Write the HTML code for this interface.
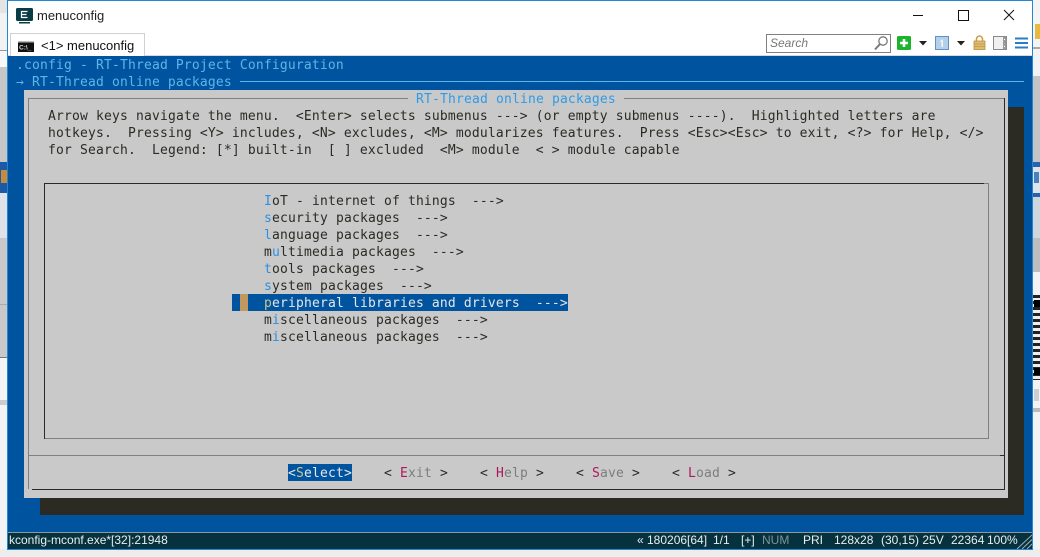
<!DOCTYPE html>
<html><head><meta charset="utf-8"><style>
html,body{margin:0;padding:0;width:1040px;height:557px;overflow:hidden;background:#f3f3f3}
div,span.a,svg{position:absolute}
.t{font:13px/17px "DejaVu Sans Mono","Liberation Mono",monospace;letter-spacing:.17px;white-space:pre;color:#2b2a24;height:17px;margin-top:1px}
.h{color:#2f8fe0}
.c{color:#5cb6e8}
.r{color:#b0175a}
.g{color:#7d7d7d}
.s{font:12px/17px "Liberation Sans",sans-serif;color:#e8eeee;top:532px;white-space:pre}
</style></head><body>
<!-- background strips: left -->
<div style="left:0;top:0;width:8px;height:13px;background:#e4e4e4"></div>
<div style="left:0;top:13px;width:8px;height:37px;background:#f2f2f2"></div>
<div style="left:0;top:50px;width:8px;height:1px;background:#999"></div>
<div style="left:0;top:51px;width:8px;height:16px;background:#f7f7f7"></div>
<div style="left:0;top:67px;width:8px;height:95px;background:#c6c6c6"></div>
<div style="left:0;top:162px;width:8px;height:31px;background:#1d5aa6"></div>
<div style="left:1px;top:170px;width:7px;height:13px;background:#c98a3c"></div>
<div style="left:0;top:193px;width:8px;height:45px;background:#dfe3e9"></div>
<div style="left:0;top:238px;width:8px;height:119px;background:#c8c8c8"></div>
<div style="left:0;top:304px;width:8px;height:1px;background:#aaa"></div>
<div style="left:0;top:357px;width:8px;height:1px;background:#777"></div>
<div style="left:0;top:358px;width:8px;height:42px;background:#f4f4f4"></div>
<div style="left:0;top:400px;width:8px;height:5px;background:#ccc"></div>
<!-- background strips: right -->
<div style="left:1033px;top:14px;width:7px;height:33px;background:#f4f4f4"></div>
<div style="left:1035px;top:24px;width:5px;height:15px;background:#e8b93c"></div>
<div style="left:1033px;top:47px;width:7px;height:2px;background:#aaa"></div>
<div style="left:1033px;top:76px;width:7px;height:86px;background:#c4c4c4"></div>
<div style="left:1033px;top:162px;width:7px;height:5px;background:#2a62ab"></div>
<div style="left:1033px;top:167px;width:7px;height:26px;background:#dfe4ea"></div>
<div style="left:1034px;top:172px;width:5px;height:11px;background:#4d7fb8"></div>
<div style="left:1033px;top:193px;width:7px;height:4px;background:#2a62ab"></div>
<div style="left:1033px;top:197px;width:7px;height:41px;background:#cfd6de"></div>
<div style="left:1033px;top:238px;width:7px;height:34px;background:#bdbdbd"></div>
<div style="left:1033px;top:295px;width:7px;height:85px;background:repeating-linear-gradient(#222 0 3px,#eee 3px 6px)"></div>
<div style="left:1034px;top:300px;width:6px;height:7px;background:#000"></div>
<div style="left:1034px;top:368px;width:6px;height:7px;background:#000"></div>
<div style="left:1034px;top:389px;width:5px;height:12px;background:#ccd0d4"></div>
<div style="left:1033px;top:408px;width:7px;height:4px;background:#bbb"></div>
<div style="left:0;top:549px;width:1040px;height:8px;background:#ededed"></div>

<!-- window -->
<div style="left:7px;top:0;width:1026px;height:550px;background:#1f86d8"></div>
<div style="left:8px;top:1px;width:1024px;height:55px;background:#fff"></div>
<div style="left:8px;top:55px;width:1024px;height:1px;background:#d9d9d9"></div>

<!-- app icon -->
<svg style="left:16px;top:8px" width="17" height="16" viewBox="0 0 17 16"><rect x="0" y="0" width="17" height="13" rx="1.5" fill="#0a3c46"/><rect x="3" y="14" width="11" height="1.5" fill="#0a3c46"/><path d="M11.5 3.5H5.5V9.5H11.5M5.500 6.500H10.500" fill="none" stroke="#fff" stroke-width="1.2"/></svg>
<div style="left:37px;top:8px;font:13px/16px 'Liberation Sans',sans-serif;color:#222;white-space:pre">menuconfig</div>

<!-- window controls -->
<div style="left:913px;top:15px;width:10px;height:1px;background:#111"></div>
<div style="left:958px;top:10px;width:9px;height:9px;border:1px solid #111"></div>
<svg style="left:1003px;top:9px" width="12" height="12" viewBox="0 0 12 12"><path d="M1 1L11 11M11 1L1 11" stroke="#111" stroke-width="1"/></svg>

<!-- tab -->
<div style="left:10px;top:33px;width:133px;height:22px;border:1px solid #d0d0d0;border-bottom:none;background:#fff"></div>
<svg style="left:18px;top:41px" width="16" height="11" viewBox="0 0 16 11"><rect width="16" height="11" fill="#111"/><rect width="16" height="1.5" fill="#bbb"/><text x="1" y="8.5" font-family="Liberation Sans" font-size="6.5" font-weight="bold" fill="#ddd">C:\_</text></svg>
<div style="left:41px;top:37px;font:13px/17px 'Liberation Sans',sans-serif;color:#111;white-space:pre">&lt;1&gt; menuconfig</div>

<!-- search -->
<div style="left:766px;top:34px;width:123px;height:17px;border:1px solid #808080;background:#fff"></div>
<div style="left:770px;top:35px;font:italic 12px/17px 'Liberation Sans',sans-serif;color:#777">Search</div>
<svg style="left:873px;top:35px" width="16" height="16" viewBox="0 0 16 16"><circle cx="10" cy="6" r="4.2" fill="none" stroke="#777" stroke-width="1.3"/><path d="M7 9L2 14.5" stroke="#777" stroke-width="2"/></svg>

<!-- toolbar icons -->
<svg style="left:897px;top:36px" width="14" height="14" viewBox="0 0 14 14"><rect width="14" height="14" rx="1.5" fill="#1cb42c"/><path d="M7 3V11M3 7H11" stroke="#fff" stroke-width="2.6"/></svg>
<svg style="left:919px;top:41px" width="8" height="5" viewBox="0 0 8 5"><path d="M0 0H8L4 4.500Z" fill="#222"/></svg>
<svg style="left:935px;top:36px" width="14" height="14" viewBox="0 0 14 14"><rect x=".5" y=".5" width="13" height="13" fill="#b4cfe8" stroke="#5d93c8"/><path d="M5 5L8 3V11H6.400V5.400L5 6Z" fill="#eef4fa"/></svg>
<svg style="left:957px;top:41px" width="8" height="5" viewBox="0 0 8 5"><path d="M0 0H8L4 4.500Z" fill="#222"/></svg>
<svg style="left:973px;top:35px" width="13" height="15" viewBox="0 0 13 15"><path d="M3.500 7V4a3 3 0 0 1 6 0V7" fill="none" stroke="#c9a050" stroke-width="1.6"/><rect x="1" y="6" width="11" height="8.500" fill="#e0bb6c" stroke="#b88f3e" stroke-width=".8"/><path d="M1.500 9H11.500M1.500 11.500H11.500" stroke="#bd9648" stroke-width=".8"/></svg>
<svg style="left:993px;top:36px" width="14" height="14" viewBox="0 0 14 14"><rect x=".5" y=".5" width="13" height="13" fill="#f0f0f0" stroke="#8a8a8a"/><rect x="10" y="1" width="3" height="12" fill="#9a9a9a"/><rect x="11" y="3" width="1" height="1" fill="#fff"/><rect x="11" y="10" width="1" height="1" fill="#fff"/></svg>
<svg style="left:1015px;top:37px" width="13" height="12" viewBox="0 0 13 12"><path d="M0 1.500H13M0 6H13M0 10.500H13" stroke="#2a7cc4" stroke-width="2"/></svg>

<!-- terminal -->
<div style="left:8px;top:56px;width:1024px;height:476px;background:#00549f"></div>
<div class="t c" style="left:16px;top:56px">.config - RT-Thread Project Configuration</div>
<div class="t c" style="left:16px;top:73px">→ RT-Thread online packages</div>
<div style="left:240px;top:81px;width:784px;height:1px;background:#5cb6e8"></div>

<!-- shadow -->
<div style="left:40px;top:107px;width:984px;height:408px;background:#2b2b24"></div>
<!-- dialog -->
<div style="left:24px;top:90px;width:984px;height:408px;background:#c9c9c9"></div>
<div style="left:28px;top:98px;width:1px;height:391px;background:#808080"></div>
<div style="left:28px;top:98px;width:976px;height:1px;background:#808080"></div>
<div style="left:1004px;top:98px;width:1px;height:392px;background:#2b2b24"></div>
<div style="left:32px;top:489px;width:973px;height:1px;background:#2b2b24"></div>
<div style="left:28px;top:455px;width:972px;height:1px;background:#808080"></div>
<div style="left:1000px;top:455px;width:5px;height:1px;background:#2b2b24"></div>
<div style="left:408px;top:90px;width:216px;height:17px;background:#c9c9c9"></div>
<div class="t" style="left:416px;top:90px;color:#2f9be8">RT-Thread online packages</div>

<div class="t" style="left:48px;top:107px">Arrow keys navigate the menu.  &lt;Enter&gt; selects submenus ---&gt; (or empty submenus ----).  Highlighted letters are</div>
<div class="t" style="left:48px;top:124px">hotkeys.  Pressing &lt;Y&gt; includes, &lt;N&gt; excludes, &lt;M&gt; modularizes features.  Press &lt;Esc&gt;&lt;Esc&gt; to exit, &lt;?&gt; for Help, &lt;/&gt;</div>
<div class="t" style="left:48px;top:141px">for Search.  Legend: [*] built-in  [ ] excluded  &lt;M&gt; module  &lt; &gt; module capable</div>

<!-- list box -->
<div style="left:44px;top:183px;width:1px;height:256px;background:#2b2b24"></div>
<div style="left:44px;top:183px;width:940px;height:1px;background:#2b2b24"></div>
<div style="left:984px;top:183px;width:5px;height:1px;background:#808080"></div>
<div style="left:988px;top:183px;width:1px;height:256px;background:#808080"></div>
<div style="left:45px;top:438px;width:944px;height:1px;background:#808080"></div>

<div class="t" style="left:264px;top:192px"><span class="h">I</span>oT - internet of things  ---&gt;</div>
<div class="t" style="left:264px;top:209px"><span class="h">s</span>ecurity packages  ---&gt;</div>
<div class="t" style="left:264px;top:226px"><span class="h">l</span>anguage packages  ---&gt;</div>
<div class="t" style="left:264px;top:243px">m<span class="h">u</span>ltimedia packages  ---&gt;</div>
<div class="t" style="left:264px;top:260px"><span class="h">t</span>ools packages  ---&gt;</div>
<div class="t" style="left:264px;top:277px"><span class="h">s</span>ystem packages  ---&gt;</div>
<div style="left:232px;top:294px;width:336px;height:17px;background:#00549f"></div>
<div style="left:240px;top:294px;width:8px;height:17px;background:#c1985f"></div>
<div class="t" style="left:264px;top:294px;color:#e6e6e6"><span style="color:#c9c58a">p</span>eripheral libraries and drivers  ---&gt;</div>
<div class="t" style="left:264px;top:311px">m<span class="h">i</span>scellaneous packages  ---&gt;</div>
<div class="t" style="left:264px;top:328px">m<span class="h">i</span>scellaneous packages  ---&gt;</div>

<!-- buttons -->
<div style="left:288px;top:464px;width:64px;height:17px;background:#00549f"></div>
<div class="t" style="left:288px;top:464px;color:#e6e6e6">&lt;<span style="color:#c9c58a">S</span>elect&gt;</div>
<div class="t" style="left:384px;top:464px">&lt; <span class="r">E</span><span class="g">xit</span> &gt;</div>
<div class="t" style="left:480px;top:464px">&lt; <span class="r">H</span><span class="g">elp</span> &gt;</div>
<div class="t" style="left:576px;top:464px">&lt; <span class="r">S</span><span class="g">ave</span> &gt;</div>
<div class="t" style="left:672px;top:464px">&lt; <span class="r">L</span><span class="g">oad</span> &gt;</div>

<!-- status bar -->
<div style="left:8px;top:532px;width:1024px;height:17px;background:#06323f"></div>
<div style="left:8px;top:532px;width:1024px;height:1px;background:#8a9a9e"></div>
<div class="s" style="left:9px">kconfig-mconf.exe*[32]:21948</div>
<div class="s" style="left:637px">« 180206[64]</div>
<div class="s" style="left:713px">1/1</div>
<div class="s" style="left:741px">[+]</div>
<div class="s" style="left:762px;color:#7f9296">NUM</div>
<div class="s" style="left:803px">PRI</div>
<div class="s" style="left:834px">128x28</div>
<div class="s" style="left:881px">(30,15) 25V</div>
<div class="s" style="left:951px">22364</div>
<div class="s" style="left:987px">100%</div>
<svg style="left:1015px;top:533px" width="17" height="16" viewBox="0 0 17 16"><path d="M2 16L17 2M7 16L17 6.500M12 16L17 11" stroke="#9fb0b3" stroke-width="1"/></svg>
</body></html>
